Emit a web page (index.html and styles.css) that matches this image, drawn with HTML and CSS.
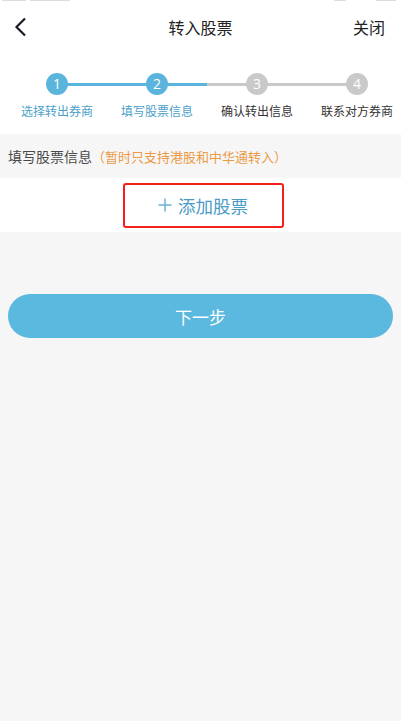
FILE: index.html
```html
<!DOCTYPE html>
<html lang="zh-CN">
<head>
    <meta charset="UTF-8">
    <meta name="viewport" content="width=device-width, initial-scale=1.0">
    <title>转入股票</title>
    <link rel="stylesheet" href="styles.css">
</head>
<body>
    <!-- Status bar remnant -->
    <div class="status">
        <span class="status-mark w1"></span>
        <span class="status-mark w2"></span>
        <span class="status-mark w3"></span>
        <span class="status-mark w4"></span>
    </div>

    <!-- Header -->
    <header class="top-bar">
        <button class="back" aria-label="返回">
            <svg width="14" height="20" viewBox="0 0 14 20">
                <path d="M11 1.5 L2.5 10 L11 18.5" fill="none" stroke="#1b1b2b" stroke-width="2.2"/>
            </svg>
        </button>
        <h1 class="title">转入股票</h1>
        <span class="close">关闭</span>
    </header>

    <!-- Steps -->
    <div class="steps">
        <div class="step done">
            <div class="dot">1</div>
            <div class="step-label">选择转出券商</div>
        </div>
        <div class="step done half">
            <div class="dot">2</div>
            <div class="step-label">填写股票信息</div>
        </div>
        <div class="step">
            <div class="dot">3</div>
            <div class="step-label">确认转出信息</div>
        </div>
        <div class="step last">
            <div class="dot">4</div>
            <div class="step-label">联系对方券商</div>
        </div>
    </div>

    <!-- Stock info -->
    <div class="section-title">
        填写股票信息<span class="note">（暂时只支持港股和中华通转入）</span>
    </div>
    <div class="add-row">
        <button class="add-btn">
            <svg class="plus" width="14" height="14" viewBox="0 0 14 14">
                <path d="M7 0.5 V13.5 M0.5 7 H13.5" stroke="#6cb3d6" stroke-width="1.5"/>
            </svg>
            添加股票
        </button>
    </div>

    <div class="actions">
        <button class="next">下一步</button>
    </div>
</body>
</html>
```

FILE: styles.css
```css
* {
    box-sizing: border-box;
}

body {
    margin: 0;
    height: 721px;
    background-color: #f6f6f6;
    font-family: "Noto Sans CJK SC", "Noto Sans", sans-serif;
    color: #333;
    overflow: hidden;
}

button {
    font-family: inherit;
    border: none;
    background: none;
    padding: 0;
    cursor: pointer;
}

.status {
    height: 4px;
    background-color: #fff;
    display: flex;
    align-items: flex-start;
    gap: 4px;
    padding-left: 2px;
}

.status-mark {
    height: 1px;
    background-color: #dcdcdc;
}

.status-mark.w1 { width: 24px; }
.status-mark.w2 { width: 40px; }
.status-mark.w3 { width: 12px; margin-left: 260px; }
.status-mark.w4 { width: 20px; margin-left: 26px; }

.top-bar {
    height: 46px;
    background-color: #fff;
    display: flex;
    align-items: center;
    position: relative;
    padding: 0 16px 0 14px;
}

.back {
    display: flex;
    align-items: center;
}

.title {
    position: absolute;
    left: 0;
    right: 0;
    margin: 0;
    text-align: center;
    font-size: 16px;
    font-weight: normal;
    color: #222;
    pointer-events: none;
}

.close {
    margin-left: auto;
    font-size: 16px;
    color: #222;
}

.steps {
    background-color: #fff;
    display: grid;
    grid-template-columns: repeat(4, 100px);
    padding: 23px 0 15px 7px;
    overflow: hidden;
}

.step {
    display: flex;
    flex-direction: column;
    align-items: center;
    position: relative;
}

/* connecting line to the next step */
.step::after {
    content: "";
    position: absolute;
    top: 10px;
    left: 50%;
    width: 100px;
    height: 3px;
    background-color: #c9c9c9;
}

.step.done::after {
    background-color: #5ab4dc;
}

.step.half::after {
    background: linear-gradient(to right, #5ab4dc 50%, #c9c9c9 50%);
}

.step.last::after {
    display: none;
}

.dot {
    width: 22px;
    height: 22px;
    border-radius: 50%;
    background-color: #c9c9c9;
    color: #fff;
    font-family: "Open Sans", sans-serif;
    font-size: 14px;
    line-height: 22px;
    text-align: center;
    position: relative;
    z-index: 1;
}

.step.done .dot {
    background-color: #5ab4dc;
}

.step-label {
    margin-top: 8px;
    font-size: 12px;
    line-height: 16px;
    color: #333;
    white-space: nowrap;
}

.step.done .step-label {
    color: #4a9fca;
}

.section-title {
    height: 44px;
    line-height: 44px;
    padding-left: 8px;
    font-size: 14px;
    color: #4a4a4a;
}

.note {
    font-size: 13px;
    color: #eb9a46;
}

.add-row {
    height: 54px;
    background-color: #fff;
    display: flex;
    justify-content: center;
    align-items: center;
    padding-left: 5px;
}

.add-btn {
    width: 161px;
    height: 45px;
    border: 2px solid #f5201c;
    border-radius: 3px;
    font-size: 17.5px;
    color: #4a9bc6;
    display: flex;
    align-items: center;
    justify-content: center;
    gap: 6px;
}

.plus {
    flex-shrink: 0;
}

.actions {
    padding: 62px 8px 0;
}

.next {
    width: 100%;
    height: 44px;
    border-radius: 22px;
    background-color: #5bb8df;
    color: #fff;
    font-size: 17px;
}
```
